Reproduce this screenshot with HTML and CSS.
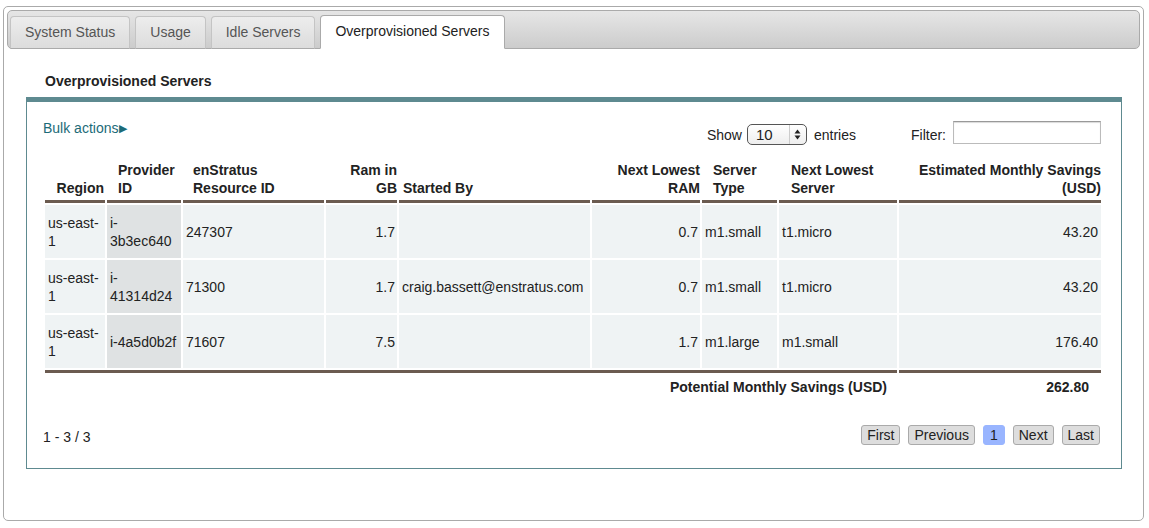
FILE: index.html
```html
<!DOCTYPE html>
<html>
<head>
<meta charset="utf-8">
<link rel="stylesheet" href="styles.css">
</head>
<body>
<div class="outer">
  <div class="tabbar">
    <div class="tab">System Status</div>
    <div class="tab">Usage</div>
    <div class="tab">Idle Servers</div>
    <div class="tab active">Overprovisioned Servers</div>
  </div>
  <h2 class="heading">Overprovisioned Servers</h2>
  <div class="panel">
    <div class="toprow">
      <a class="bulk">Bulk actions<span class="tri">&#9654;</span></a>
      <div class="controls">
        <span class="show">Show</span>
        <span class="select"><span class="sel-val">10</span><span class="sel-arrows"><svg width="7" height="11" viewBox="0 0 7 11"><path d="M3.5 0.5 L6.5 4.5 L0.5 4.5 Z M3.5 10.5 L6.5 6.5 L0.5 6.5 Z" fill="#222"/></svg></span></span>
        <span class="entries">entries</span>
        <span class="filter">Filter:</span>
        <span class="input"></span>
      </div>
    </div>
    <table class="grid">
      <colgroup>
        <col class="c1"><col class="c2"><col class="c3"><col class="c4"><col class="c5"><col class="c6"><col class="c7"><col class="c8"><col class="c9">
      </colgroup>
      <thead>
        <tr>
          <th class="r">Region</th>
          <th>Provider ID</th>
          <th>enStratus Resource ID</th>
          <th class="r">Ram in GB</th>
          <th>Started By</th>
          <th class="r">Next Lowest RAM</th>
          <th>Server Type</th>
          <th>Next Lowest Server</th>
          <th class="r">Estimated Monthly Savings (USD)</th>
        </tr>
      </thead>
      <tbody>
        <tr>
          <td>us-east-1</td><td class="sorted">i-3b3ec640</td><td>247307</td><td class="r">1.7</td><td></td><td class="r">0.7</td><td>m1.small</td><td>t1.micro</td><td class="r">43.20</td>
        </tr>
        <tr>
          <td>us-east-1</td><td class="sorted">i-41314d24</td><td>71300</td><td class="r">1.7</td><td>craig.bassett@enstratus.com</td><td class="r">0.7</td><td>m1.small</td><td>t1.micro</td><td class="r">43.20</td>
        </tr>
        <tr>
          <td>us-east-1</td><td class="sorted">i-4a5d0b2f</td><td>71607</td><td class="r">7.5</td><td></td><td class="r">1.7</td><td>m1.large</td><td>m1.small</td><td class="r">176.40</td>
        </tr>
      </tbody>
      <tfoot>
        <tr>
          <td colspan="8" class="r">Potential Monthly Savings (USD)</td>
          <td class="r total">262.80</td>
        </tr>
      </tfoot>
    </table>
    <div class="bottomrow">
      <span class="info">1 - 3 / 3</span>
      <div class="pager">
        <span class="pbtn">First</span>
        <span class="pbtn">Previous</span>
        <span class="pbtn cur">1</span>
        <span class="pbtn">Next</span>
        <span class="pbtn">Last</span>
      </div>
    </div>
  </div>
</div>
</body>
</html>
```
FILE: styles.css
```css
* { box-sizing: border-box; }
html, body { margin: 0; padding: 0; background: #fff; }
body {
  font-family: "Liberation Sans", Arial, Helvetica, sans-serif;
  font-size: 14px;
  color: #222;
  padding: 6px 5px 0 3px;
}
.outer {
  border: 1px solid #aaa;
  border-radius: 5px;
  height: 515px;
  padding: 3px 3px 0 3px;
}
.tabbar {
  display: flex;
  align-items: flex-end;
  height: 39px;
  border: 1px solid #aaa;
  border-radius: 5px;
  background: linear-gradient(#e6e6e6, #cccccc);
  padding: 0 0 0 2px;
}
.tab {
  height: 33px;
  line-height: 31px;
  padding: 0 14px;
  margin-right: 5px;
  margin-bottom: -1px;
  border: 1px solid #c4c4c4;
  border-bottom: 1px solid #aaa;
  border-radius: 4px 4px 0 0;
  background: linear-gradient(#ededed, #dcdcdc);
  color: #555;
}
.tab.active {
  background: #fff;
  border-color: #aaa;
  border-bottom-color: #fff;
  color: #222;
  height: 34px;
}
.heading {
  font-size: 14px;
  font-weight: bold;
  margin: 23px 0 7px 38px;
  line-height: 18px;
  color: #222;
}
.panel {
  margin: 0 18px 0 19px;
  border: 1px solid #5e8a90;
  border-top: 5px solid #5e8a90;
  height: 372px;
  padding: 18px 20px 0 16px;
}
.toprow {
  display: flex;
  justify-content: space-between;
  align-items: flex-start;
  height: 24px;
}
.bulk {
  color: #1c6b78;
  line-height: 16px;
}
.tri { font-size: 11px; margin-left: 1px; position: relative; top: -1px; }
.controls {
  display: flex;
  align-items: center;
  height: 24px;
}
.show { margin-right: 5px; margin-top: 6px; }
.entries { margin-left: 7px; margin-top: 6px; }
.select {
  display: inline-flex;
  align-items: center;
  width: 60px;
  height: 21px;
  border: 1px solid #555;
  border-radius: 5px;
  background: linear-gradient(#fff, #eee);
  margin-top: 4px;
  padding-left: 8px;
  justify-content: space-between;
  font-size: 15px;
}
.sel-arrows {
  width: 17px;
  height: 19px;
  border-left: 1px solid #ccc;
  display: flex;
  align-items: center;
  justify-content: center;
}
.filter { margin-left: 55px; margin-right: 7px; margin-top: 6px; }
.input {
  width: 148px;
  height: 23px;
  border: 1px solid #bbb;
  border-top-color: #999;
  box-shadow: inset 0 1px 1px rgba(0,0,0,0.15);
  background: #fff;
}
.grid {
  table-layout: fixed;
  width: 1060px;
  border-collapse: separate;
  border-spacing: 2px;
  margin: 15px 0 0 0;
}
.c1 { width: 60px; } .c2 { width: 74px; } .c3 { width: 141px; }
.c4 { width: 71px; } .c5 { width: 191px; } .c6 { width: 108px; }
.c7 { width: 75px; } .c8 { width: 118px; } .c9 { width: 202px; }
th {
  text-align: left;
  vertical-align: bottom;
  font-weight: bold;
  line-height: 18px;
  padding: 0 9px 3px 10px;
  border-bottom: 3px solid #6b5b50;
}
th:first-child { padding-left: 3px; padding-right: 1px; }
th:nth-child(2) { padding-left: 11px; padding-right: 2px; }
th:nth-child(4) { padding-right: 0; }
th:nth-child(5) { padding-left: 4px; }
th:nth-child(6) { padding-right: 0; }
th:nth-child(7) { padding-left: 11px; padding-right: 2px; }
th:nth-child(8) { padding-left: 12px; }
th:nth-child(9) { padding-right: 0; }
th.r { text-align: right; }
td {
  line-height: 18px;
  padding: 8px 3px;
  height: 53px;
  background: #eff3f4;
  vertical-align: middle;
}
td.r { text-align: right; }
td.sorted { background: #dfe2e3; }
tbody td:nth-child(4), tbody td:nth-child(6) { padding-right: 2px; }
tbody td:nth-child(9) { padding-right: 3px; }
tfoot td {
  background: #fff;
  border-top: 3px solid #6b5b50;
  font-weight: bold;
  height: auto;
  padding: 5px 10px 2px 3px;
}
tfoot td.total { padding-right: 12px; }
.bottomrow {
  display: flex;
  justify-content: space-between;
  align-items: center;
  margin-top: 25px;
}
.info { margin-top: 4px; }
.pager { display: flex; gap: 8px; margin-right: 1px; }
.pbtn {
  display: inline-block;
  height: 20px;
  line-height: 18px;
  padding: 0 5px;
  border: 1px solid #aaa;
  border-radius: 3px;
  background: #ddd;
  color: #222;
}
.pbtn.cur {
  background: #99b5ff;
  border-color: #99b5ff;
  padding: 0 6px;
}
```
